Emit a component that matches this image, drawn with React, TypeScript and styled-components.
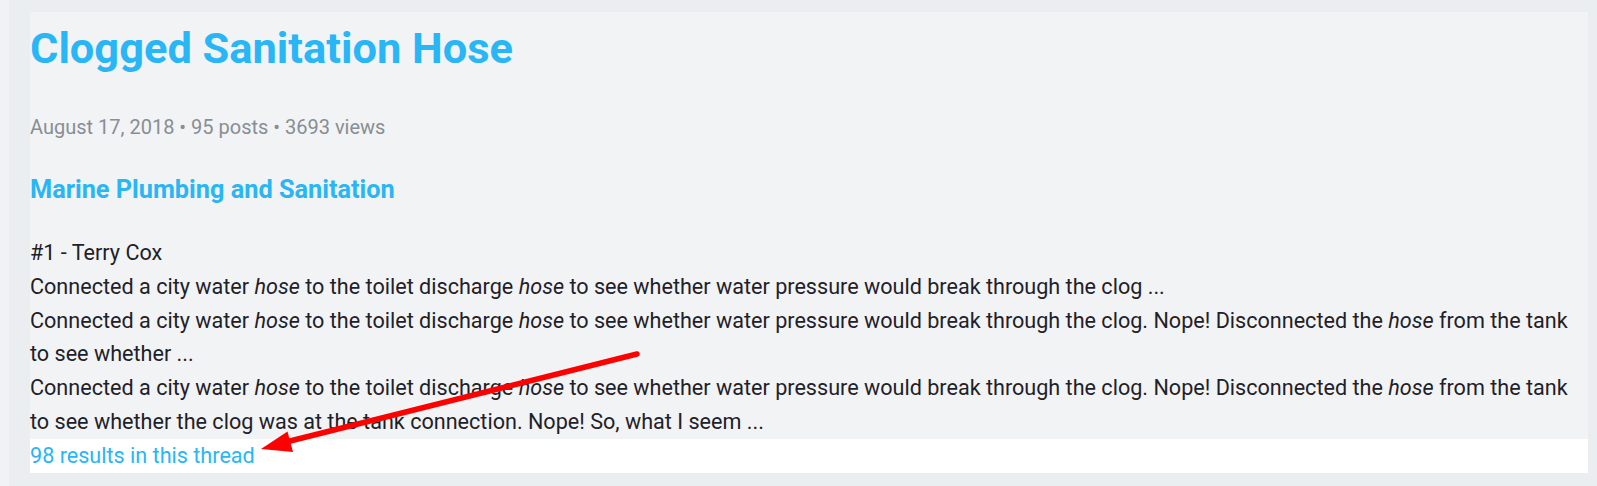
import React from "react";
import styled, { createGlobalStyle } from "styled-components";

const GlobalStyle = createGlobalStyle`
  html, body {
    margin: 0;
    padding: 0;
    background: #ebeef1;
  }
  body {
    font-family: Roboto, "Noto Sans", "Liberation Sans", sans-serif;
    width: 1597px;
    height: 486px;
    overflow: hidden;
  }
`;

const Page = styled.div`
  position: relative;
  display: flex;
  width: 1597px;
  height: 486px;
`;

const Rail = styled.div`
  width: 9px;
  flex: none;
  background: #f0f2f4;
`;

const Main = styled.main`
  flex: 1;
  padding: 12px 9px 13px 21px;
`;

const Card = styled.article`
  background: #f2f3f5;
  display: flex;
  flex-direction: column;
`;

const Title = styled.h1`
  margin: 11px 0 0;
  font-size: 43.4px;
  line-height: 52px;
  font-weight: 700;
  color: #29b6f6;
`;

const Meta = styled.div`
  margin-top: 35px;
  font-size: 20px;
  line-height: 34px;
  color: #878e94;
`;

const Forum = styled.h2`
  margin: 29px 0 0;
  font-size: 25.3px;
  line-height: 34px;
  font-weight: 700;
  color: #29b6f6;
`;

const Body = styled.div`
  margin-top: 29px;
  padding-right: 10px;
  font-size: 21.6px;
  line-height: 33.8px;
  color: #1f2128;
`;

const Line = styled.p`
  margin: 0;
`;

const Footer = styled.div`
  background: #ffffff;
  height: 34px;
  font-size: 21.6px;
  line-height: 34px;
`;

const ResultsLink = styled.a`
  color: #29b6f6;
  text-decoration: none;
`;

const Overlay = styled.svg`
  position: absolute;
  left: 0;
  top: 0;
  pointer-events: none;
`;

export default function App() {
  return (
    <>
      <GlobalStyle />
      <Page>
        <Rail />
        <Main>
          <Card>
            <Title>Clogged Sanitation Hose</Title>
            <Meta>August 17, 2018 • 95 posts • 3693 views</Meta>
            <Forum>Marine Plumbing and Sanitation</Forum>
            <Body>
              <Line>#1 - Terry Cox</Line>
              <Line>
                Connected a city water <em>hose</em> to the toilet discharge <em>hose</em> to see
                whether water pressure would break through the clog ...
              </Line>
              <Line>
                Connected a city water <em>hose</em> to the toilet discharge <em>hose</em> to see
                whether water pressure would break through the clog. Nope! Disconnected the{" "}
                <em>hose</em> from the tank to see whether ...
              </Line>
              <Line>
                Connected a city water <em>hose</em> to the toilet discharge <em>hose</em> to see
                whether water pressure would break through the clog. Nope! Disconnected the{" "}
                <em>hose</em> from the tank to see whether the clog was at the tank connection.
                Nope! So, what I seem ...
              </Line>
            </Body>
            <Footer>
              <ResultsLink href="#">98 results in this thread</ResultsLink>
            </Footer>
          </Card>
        </Main>
        <Overlay width="1597" height="486" viewBox="0 0 1597 486">
          <line
            x1="637"
            y1="354"
            x2="286"
            y2="442"
            stroke="#ff0000"
            strokeWidth="5.5"
            strokeLinecap="round"
          />
          <polygon points="261,449 293,452 287.5,431.5" fill="#ff0000" />
        </Overlay>
      </Page>
    </>
  );
}
